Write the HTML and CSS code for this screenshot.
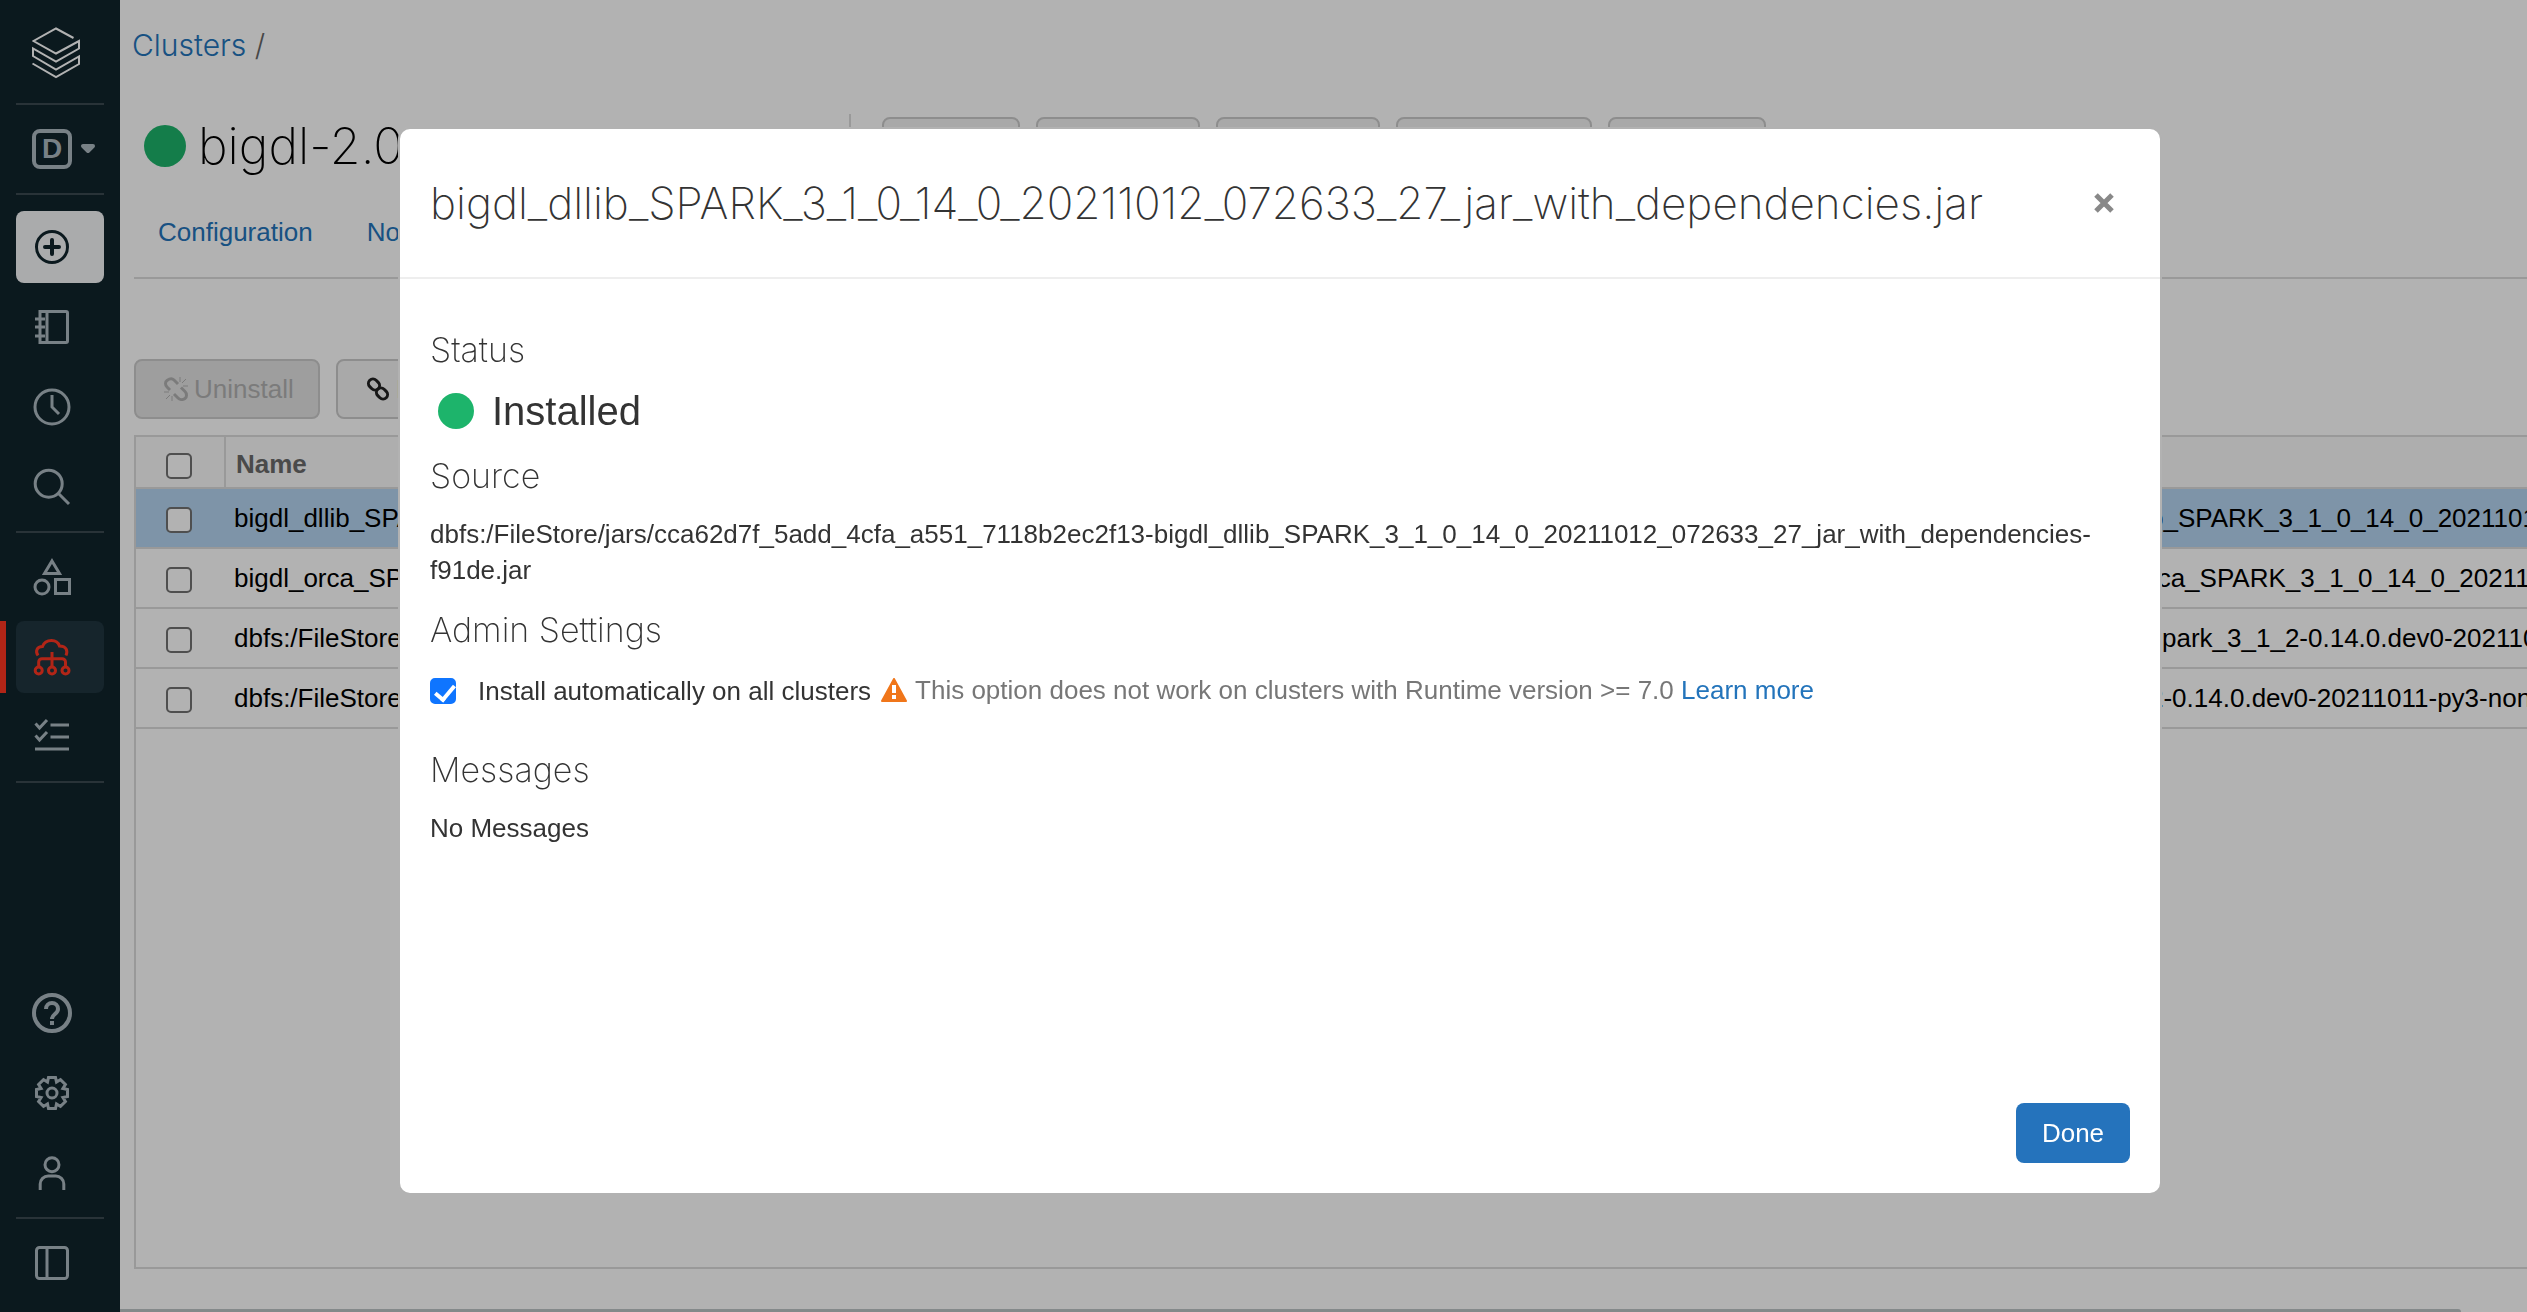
FILE: index.html
```html
<!DOCTYPE html>
<html lang="en">
<head>
<meta charset="utf-8">
<title>Clusters</title>
<link rel="stylesheet" href="styles.css">
</head>
<body>
<div class="app">
  <nav class="sidebar" aria-label="Main">
    <a class="logo" href="#" aria-label="Home">
      <svg width="48" height="52" viewBox="32 27 48 52" fill="none" stroke="currentColor" stroke-width="2"><path d="M73.500 38 56 28.500 33.500 41 56 53.500 79 41v7.500L56 61.500 33 48.500V56L56 69.500 79 56.500V64L56 77 32.500 63.500"/></svg>
    </a>
    <hr class="rule">
    <button class="item workspace" type="button" aria-label="Workspace type">
      <span class="badge">D</span>
      <svg width="16" height="12" viewBox="0 0 16 12"><path d="M3 3h10l-5 5z" fill="currentColor" stroke="currentColor" stroke-width="4" stroke-linejoin="round"/></svg>
    </button>
    <hr class="rule">
    <button class="item create" type="button" aria-label="Create">
      <svg class="icon" viewBox="0 0 40 40"><circle cx="20" cy="20" r="15.500"/><path d="M20 13v14M13 20h14" stroke-width="4" stroke-linecap="round"/></svg>
    </button>
    <a class="item" href="#" aria-label="Workspace"><svg class="icon" viewBox="0 0 40 40"><path d="M8 4.500h26a1.500 1.500 0 0 1 1.500 1.500v28a1.500 1.500 0 0 1-1.500 1.500H8zM15 4v32M3 12h10M3 20h10M3 29h10"/></svg></a>
    <a class="item" href="#" aria-label="Recents"><svg class="icon" viewBox="0 0 40 40"><circle cx="20" cy="20" r="17"/><path d="M20 8v12l7 7"/></svg></a>
    <a class="item" href="#" aria-label="Search"><svg class="icon" viewBox="0 0 40 40"><circle cx="16.700" cy="16.700" r="13.500"/><path d="m26 26 11 11"/></svg></a>
    <hr class="rule">
    <a class="item" href="#" aria-label="Data"><svg class="icon" viewBox="0 0 40 40"><path d="m20 4 7.500 12.500h-15zM23.500 22.500h14v14h-14z"/><circle cx="10" cy="30" r="7"/></svg></a>
    <a class="item active" href="#" aria-label="Compute"><svg class="icon" viewBox="0 0 40 40"><path d="M6 18.500C3 14 5 9.500 10.500 9.500 12 5.500 15 3.500 19.500 3.500c4.500 0 7 2.500 8 5.500 7 0 8.500 5 6.500 9.500M20 15v15M6.700 30v-5a3.300 3.300 0 0 1 3.300-3.300h20a3.300 3.300 0 0 1 3.500 3.300v5"/><circle cx="6.700" cy="33.500" r="3.500"/><circle cx="20" cy="33.500" r="3.500"/><circle cx="33.500" cy="33.500" r="3.500"/></svg></a>
    <a class="item" href="#" aria-label="Jobs"><svg class="icon" viewBox="0 0 40 40"><path d="M18.500 8H37M18.500 20H37M3 32h34M3.500 6.500 7.500 11 15 3M3.500 18.500 7.500 23 15 15"/></svg></a>
    <hr class="rule">
    <div class="spacer"></div>
    <a class="item" href="#" aria-label="Help"><svg class="icon" viewBox="0 0 40 40"><circle cx="20" cy="20" r="18" stroke-width="4"/><path d="M14 16a6 6 0 0 1 12 0c0 5-6 5-6 10M20 28v4" stroke-width="4"/></svg></a>
    <a class="item" href="#" aria-label="Settings"><svg class="icon" viewBox="-20 -20 40 40"><path d="M-3.500-15.500h7L4.500-10.900 8.500-13.400 13.400-8.500 10.900-4.500 15.500-3.500v7L10.900 4.500 13.400 8.500 8.500 13.400 4.500 10.900 3.500 15.500h-7L-4.500 10.900-8.500 13.400-13.400 8.500-10.900 4.500-15.500 3.500v-7L-10.900-4.500-13.400-8.500-8.500-13.400-4.500-10.900z"/><circle r="5"/></svg></a>
    <a class="item" href="#" aria-label="Account"><svg class="icon" viewBox="0 0 40 40"><circle cx="20" cy="11.700" r="7"/><path d="M8.200 37v-6a8 8 0 0 1 8-8h7.600a8 8 0 0 1 8 8v6"/></svg></a>
    <hr class="rule">
    <a class="item" href="#" aria-label="Toggle sidebar"><svg class="icon" viewBox="0 0 40 40"><rect x="4.500" y="4.500" width="31" height="31" rx="3"/><path d="M15 4v32"/></svg></a>
  </nav>

  <main class="main">
    <div class="crumbs"><a href="#">Clusters</a> <span>/</span></div>
    <div class="heading">
      <span class="dot dot-large"></span>
      <h1>bigdl-2.0</h1>
      <div class="actions">
        <button class="btn w-s" type="button" aria-label="Edit"></button>
        <button class="btn w-m" type="button" aria-label="Clone"></button>
        <button class="btn w-m" type="button" aria-label="Restart"></button>
        <button class="btn w-l" type="button" aria-label="Terminate"></button>
        <button class="btn w-d" type="button" aria-label="Delete"></button>
      </div>
    </div>
    <div class="tabs"><a href="#">Configuration</a><a href="#">Not</a></div>
    <div class="toolbar">
      <button class="btn uninstall" type="button" disabled>
        <svg width="24" height="24" viewBox="0 0 24 24" fill="none" stroke="currentColor" stroke-width="3"><path d="M6 13 3 10C1 8 1 5 3 3.500S8 1 10 3l4 4M10 17l4 4c2 2 5 2 7 .5s2-5 0-7l-4-4"/><path d="M16 0v5M22 2l-4 4M19 9h5M8 19v5M2 22l4-4M0 15h5" stroke-width="1"/></svg>
        Uninstall
      </button>
      <button class="btn install" type="button" aria-label="Install new">
        <svg width="24" height="24" viewBox="0 0 24 24" fill="none" stroke="currentColor" stroke-width="3"><rect x="2" y="3" width="12" height="9" rx="4.500" transform="rotate(45 8 7.500)"/><rect x="10" y="12" width="12" height="9" rx="4.500" transform="rotate(45 16 16.500)"/></svg>
        I
      </button>
    </div>
    <div class="grid">
      <table>
        <colgroup><col class="c-check"><col><col class="c-source"></colgroup>
        <thead><tr><th><input class="check" type="checkbox" aria-label="Select all"></th><th class="name">Name</th><th></th></tr></thead>
        <tbody>
          <tr class="selected"><td><input class="check" type="checkbox" aria-label="Select library 1"></td><td>bigdl_dllib_SPA</td><td>b_SPARK_3_1_0_14_0_2021101</td></tr>
          <tr><td><input class="check" type="checkbox" aria-label="Select library 2"></td><td>bigdl_orca_SPA</td><td>rca_SPARK_3_1_0_14_0_202110</td></tr>
          <tr><td><input class="check" type="checkbox" aria-label="Select library 3"></td><td>dbfs:/FileStore</td><td>spark_3_1_2-0.14.0.dev0-202110</td></tr>
          <tr><td><input class="check" type="checkbox" aria-label="Select library 4"></td><td>dbfs:/FileStore</td><td>2-0.14.0.dev0-20211011-py3-non</td></tr>
        </tbody>
      </table>
    </div>
    <div class="scrollbar"></div>
  </main>
</div>

<div class="backdrop">
  <section class="modal" role="dialog" aria-modal="true" aria-labelledby="modal-title">
    <header class="modal-header">
      <h2 id="modal-title">bigdl_dllib_SPARK_3_1_0_14_0_20211012_072633_27_jar_with_dependencies.jar</h2>
      <button class="close" type="button" aria-label="Close"><svg width="22" height="22" viewBox="0 0 22 22"><path d="m3 3 16 16M19 3 3 19" stroke="currentColor" stroke-width="5"/></svg></button>
    </header>
    <div class="modal-body">
      <h3>Status</h3>
      <p class="status"><span class="dot"></span>Installed</p>
      <h3>Source</h3>
      <p class="text">dbfs:/FileStore/jars/cca62d7f_5add_4cfa_a551_7118b2ec2f13-bigdl_dllib_SPARK_3_1_0_14_0_20211012_072633_27_jar_with_dependencies-<wbr>f91de.jar</p>
      <h3>Admin Settings</h3>
      <div class="setting">
        <input class="check" id="auto" type="checkbox" checked>
        <label for="auto">Install automatically on all clusters</label>
        <div class="hint">
          <svg width="26" height="24" viewBox="0 0 26 24"><path d="M13 1 25 23H1z" fill="#f0761a" stroke="#f0761a" stroke-width="2" stroke-linejoin="round"/><path d="M13 7v8M13 17v4" stroke="#fff" stroke-width="4"/></svg>
          <span>This option does not work on clusters with Runtime version &gt;= 7.0 <a href="#">Learn more</a></span>
        </div>
      </div>
      <h3>Messages</h3>
      <p class="text">No Messages</p>
    </div>
    <footer class="modal-footer"><button class="done" type="button">Done</button></footer>
  </section>
</div>
</body>
</html>
```
FILE: styles.css
```css
* { box-sizing: border-box; }

body {
  margin: 0;
  background: #fff;
  color: #333;
  font: 26px/36px "Liberation Sans", Arial, sans-serif;
}

h1, h2, h3, p { margin: 0; }

h1, h2, h3, .crumbs {
  font-family: Inter, "Liberation Sans", sans-serif;
  font-weight: 200;
}

a { color: #2374bb; text-decoration: none; }

button { font: inherit; cursor: pointer; }

.app { display: flex; height: 100vh; overflow: hidden; }

/* Sidebar */
.sidebar {
  display: flex;
  flex: none;
  flex-direction: column;
  gap: 8px;
  width: 120px;
  padding: 0 16px 13px;
  background: #10242c;
  color: #adb9c0;
}

.logo { flex: none; height: 95px; padding: 27px 16px 0; color: #fff; }
.logo svg { display: block; }

.rule { flex: none; width: 100%; height: 2px; margin: 0; border: 0; background: #3b4a51; }

.item {
  display: flex;
  flex: none;
  align-items: center;
  width: 88px;
  height: 72px;
  padding: 0 16px;
  border: 0;
  border-radius: 8px;
  background: none;
  color: inherit;
}

.icon { flex: none; width: 40px; height: 40px; fill: none; stroke: currentColor; stroke-width: 3; }

.workspace { gap: 8px; }

.badge {
  flex: none;
  width: 40px;
  height: 40px;
  border: 4px solid;
  border-radius: 8px;
  font-size: 28px;
  font-weight: bold;
  line-height: 32px;
  text-align: center;
}

.workspace svg { flex: none; }

.create { margin-top: 8px; background: #f4f5f7; color: #10242c; }

.active { background: #20353f; color: #ff3621; position: relative; }
.active::before { content: ""; position: absolute; top: 0; bottom: 0; left: -16px; width: 6px; background: #ff3621; }

.spacer { flex: 1; }

/* Page behind the dialog */
.main { display: flex; flex: 1; flex-direction: column; min-width: 0; }

.crumbs { padding: 22px 12px 0; font-size: 30px; font-weight: 300; line-height: 46px; color: #666; }

.heading { display: flex; align-items: center; height: 64px; margin-top: 46px; padding-left: 24px; gap: 12px; }
.heading h1 { width: 653px; color: #000; font-size: 50px; line-height: 64px; border-right: 2px solid #dcdcdc; }

.dot { flex: none; width: 36px; height: 36px; border-radius: 50%; background: #1db46b; }
.dot-large { width: 42px; height: 42px; }

.actions { display: flex; gap: 16px; margin: 2px 0 0 19px; }

.btn {
  display: flex;
  align-items: center;
  height: 60px;
  border: 2px solid #cacaca;
  border-radius: 8px;
  background: #f3f3f3;
  color: #222;
}

.btn svg { flex: none; }

.w-s { width: 138px; }
.w-m { width: 164px; }
.w-l { width: 196px; }
.w-d { width: 158px; }

.tabs { display: flex; gap: 54px; height: 101px; margin-left: 14px; padding: 36px 24px 0; border-bottom: 2px solid #dcdcdc; }

.toolbar { display: flex; gap: 16px; padding: 80px 14px 16px; }
.uninstall { width: 186px; padding: 0 20px 0 28px; gap: 6px; background: #e3e3e3; color: #b1b1b1; }
.install { width: 160px; padding: 0 28px; gap: 6px; }

.grid { flex: 1; margin: 0 0 40px 14px; border: 2px solid #dcdcdc; border-right: 0; overflow: hidden; }

table { width: 100%; border-collapse: separate; border-spacing: 0; table-layout: fixed; color: #000; }
.c-check { width: 88px; }
.c-source { width: 378px; }

th, td { height: 60px; padding: 0 0 0 10px; border-bottom: 2px solid #dcdcdc; text-align: left; white-space: nowrap; overflow: hidden; }
th { height: 52px; padding-top: 3px; background: #f9f9f9; color: #6b6b6b; }
td:last-child { padding-left: 0; }
th:first-child, td:first-child { padding: 4px 0 0 30px; }
th:first-child { padding-top: 7px; }
.name { border-left: 2px solid #dcdcdc; }
.selected { background: #b5d5f1; }

.check {
  appearance: none;
  display: block;
  flex: none;
  width: 26px;
  height: 26px;
  margin: 0;
  border: 2px solid #717171;
  border-radius: 5px;
  background: #fff;
}

.check:checked { border-color: #0f75ff; background: #0f75ff; position: relative; }
.check:checked::after {
  content: "";
  position: absolute;
  top: 1px;
  left: 7px;
  width: 8px;
  height: 16px;
  border: solid #fff;
  border-width: 0 4px 4px 0;
  transform: rotate(40deg);
}

.scrollbar { flex: none; height: 3px; margin-right: 66px; border-top-right-radius: 3px; background: #bec4c6; }

/* Dialog */
.backdrop {
  position: fixed;
  inset: 0;
  display: flex;
  padding: 127px 365px 117px 398px;
  background: rgba(0, 0, 0, 0.3);
}

.modal {
  display: flex;
  flex: 1;
  flex-direction: column;
  min-width: 0;
  border: 2px solid #b2b2b2;
  border-radius: 12px;
  background: #fff;
}

.modal-header { display: flex; justify-content: space-between; align-items: center; height: 150px; padding: 0 45px 0 30px; border-bottom: 2px solid #eee; }
.modal-header h2 { font-size: 44px; line-height: 52px; white-space: nowrap; }
.close { display: flex; padding: 0; border: 0; background: none; color: #888; }

.modal-body { flex: 1; padding: 49px 30px 0; }
h3 { font-size: 34px; line-height: 44px; }

.status { display: flex; align-items: center; gap: 18px; margin: 14px 0 18px 8px; font-size: 40px; line-height: 50px; }
.text { margin: 18px 0 20px; }
.setting { display: flex; align-items: center; margin: 20px 0 38px; }
.setting label { margin: 0 10px 0 22px; }
.hint { display: flex; align-items: center; gap: 8px; padding-bottom: 4px; margin-bottom: -2px; color: #777; }

.modal-footer { display: flex; justify-content: flex-end; padding: 30px; }
.done { width: 114px; height: 60px; padding: 0; border: 0; border-radius: 8px; background: #2573bc; color: #fff; }
```
